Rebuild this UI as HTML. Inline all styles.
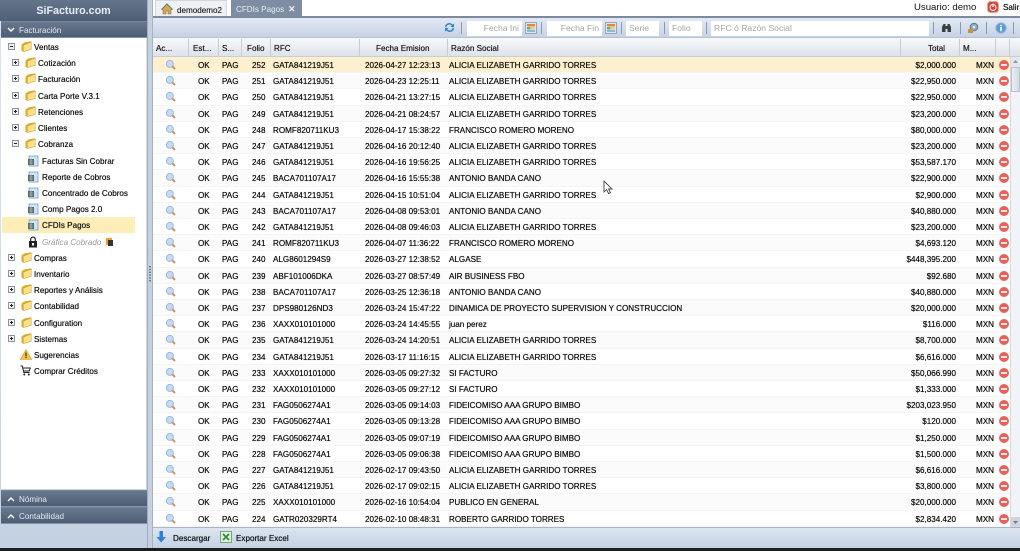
<!DOCTYPE html>
<html lang="es"><head><meta charset="utf-8"><title>SiFacturo</title>
<style>
*{box-sizing:border-box}
html,body{margin:0;padding:0;width:1020px;height:551px;overflow:hidden;background:#fff}
body{font-family:"Liberation Sans",sans-serif;font-size:8.1px;color:#111;position:relative}
.a{position:absolute}
svg{display:block}
#left{left:0;top:0;width:147px;height:548px;background:linear-gradient(#dbe4ef,#c4d1e2)}
#logo{left:0;top:0;width:147px;height:21px;background:linear-gradient(#65758c,#4f5f76);color:#e9eef5;font-weight:bold;font-size:10.7px;text-align:center;line-height:23px;letter-spacing:0}
.ph{left:1px;width:146px;height:17px;background:linear-gradient(#68788f,#4d5d74);color:#e6ebf2;line-height:17px;padding-left:18px;border-top:1px solid #75859b;border-bottom:1px solid #8393a8}
.ph svg{position:absolute;left:6px;top:5px}
#tree{left:1px;top:38px;width:145px;height:451px;background:#fff}
.t{position:absolute;height:16px;line-height:16px;white-space:nowrap;text-shadow:0 0 .5px #222}
.t svg{position:absolute}
.it{left:0;width:145px}
.it span{position:absolute;top:1px}
#sep{left:147px;top:0;width:6px;height:548px;background:#c5d1e1;border-left:1px solid #9fadbf;border-right:1px solid #a5b2c4}
#tabs{left:153px;top:0;width:867px;height:17px;background:#fff}
.tab{position:absolute;top:0;height:16px;line-height:19px;text-shadow:0 0 .4px #555}
#bar{left:153px;top:16px;width:867px;height:2px;background:#7d8a9d}
#tb{left:153px;top:18px;width:867px;height:20px;background:linear-gradient(#e2e9f3,#c6d3e5);border-bottom:1px solid #b5c2d4}
.inp{position:absolute;top:3px;height:15px;background:#fff;color:#a5a5a5;line-height:15px;font-size:8.6px;padding:0 3px}
.s{position:absolute;top:4px;width:1px;height:12px;background:#8b9ab0}
#hd{left:153px;top:38px;width:867px;height:19px;background:linear-gradient(#f8f9fb,#dee3ea);border-bottom:1px solid #c9ced6;color:#222}
#hd span{position:absolute;top:4px;line-height:13px;white-space:nowrap;text-shadow:0 0 .5px #111}
#hd i{position:absolute;top:1px;width:1px;height:17px;background:#c7ccd4}
#g{left:153px;top:57px;width:857px;height:470px;overflow:hidden;background:#fff}
.r{position:relative;height:16.21px;line-height:16.21px;white-space:nowrap;background:#fff;border-bottom:1px solid #f5f5f5}
.r:nth-child(even){background:#fbfbfb}
.r.sel{background:#fdf0cf}
.r b{font-weight:normal;position:absolute;top:1px;color:#111;text-shadow:0 0 .5px #111}
.r b:nth-of-type(1){left:45px}
.r b:nth-of-type(2){left:69px}
.r b:nth-of-type(3){left:99px;width:12px;text-align:center}
.r b:nth-of-type(4){left:120px}
.r b:nth-of-type(5){left:212px}
.r b:nth-of-type(6){left:296px}
.r b:nth-of-type(7){right:54px}
.r b:nth-of-type(8){left:823px}
.r svg{position:absolute;top:3px}
.r .m{left:13px;width:10px;height:10px}
.r .x{left:846px;width:10px;height:10px;top:3px}
#sb{left:1010px;top:57px;width:10px;height:470px;background:#f1f3f6;border-left:1px solid #d6dae0}
#ft{left:153px;top:527px;width:867px;height:21px;background:linear-gradient(#dce5f0,#c5d2e3);border-top:1px solid #aab6c7}
#ft span{text-shadow:0 0 .5px #111}
#bot{left:0;top:548px;width:1020px;height:3px;background:#1e1e1e}
</style></head><body>
<svg width="0" height="0" style="position:absolute">
<defs>
<symbol id="m" viewBox="0 0 10 10"><circle cx="3.9" cy="3.9" r="3.5" fill="#c6daf3" stroke="#9dbadd" stroke-width="1"/><path d="M6.2 6.2L9 9" stroke="#cf9350" stroke-width="2"/></symbol>
<symbol id="x" viewBox="0 0 10 10"><circle cx="5" cy="5" r="4.7" fill="#e9605a"/><circle cx="5" cy="5" r="4.7" fill="none" stroke="#d4736a" stroke-width=".6"/><rect x="2" y="4" width="6" height="2" fill="#fbe3e0"/></symbol>
<symbol id="f" viewBox="0 0 11 11"><path d="M.5 3.5L3.5 1.4 10.5 .3V8.5L2.4 10.8 .5 9.7Z" fill="#dfa92f"/><path d="M2.4 4.2L10.2 1.2V8.3L2.4 10.6Z" fill="#f9e08a" stroke="#cfa233" stroke-width=".5"/></symbol>
<symbol id="p" viewBox="0 0 7 7"><rect x=".5" y=".5" width="6" height="6" fill="#eef0f3" stroke="#8a929c"/><path d="M2 3.5H5M3.5 2V5" stroke="#222" stroke-width="1"/></symbol>
<symbol id="n" viewBox="0 0 7 7"><rect x=".5" y=".5" width="6" height="6" fill="#eef0f3" stroke="#8a929c"/><path d="M2 3.5H5" stroke="#222" stroke-width="1"/></symbol>
<symbol id="d" viewBox="0 0 12 12"><rect x="2" y="1" width="9" height="10" fill="#cfe3f7" stroke="#6f9fd0" stroke-width=".8"/><rect x="1" y="4" width="6" height="6" fill="#5f6b66"/><path d="M2 6H6M2 8H6M4 3V10" stroke="#c8d2cd" stroke-width=".6"/></symbol>
<symbol id="cal" viewBox="0 0 12 12"><rect x=".5" y=".5" width="11" height="11" fill="#dbe7f5" stroke="#8fa7c4"/><rect x="2" y="2" width="8" height="2.4" fill="#e8853a"/><rect x="2" y="5" width="3.5" height="2.5" fill="#6cb35c"/><rect x="6" y="5" width="4" height="2.5" fill="#f0cf6b"/><rect x="2" y="8" width="8" height="2" fill="#8fb6dd"/></symbol>
</defs></svg>

<div class="a" id="left">
<div class="a" id="logo">SiFacturo.com</div>
<div class="a ph" style="top:21px"><svg width="8" height="6" viewBox="0 0 8 6"><path d="M1 1L4 4 7 1" fill="none" stroke="#fff" stroke-width="1.4"/></svg>Facturación</div>
<div class="a" id="tree">
<div class="t it" style="top:1px"><svg style="left:7px;top:4px" width="7" height="7"><use href="#n"/></svg><svg style="left:20px;top:2px" width="11" height="11"><use href="#f"/></svg><span style="left:33px">Ventas</span></div>
<div class="t it" style="top:17px"><svg style="left:11px;top:4px" width="7" height="7"><use href="#p"/></svg><svg style="left:24px;top:2px" width="11" height="11"><use href="#f"/></svg><span style="left:37px">Cotización</span></div>
<div class="t it" style="top:33px"><svg style="left:11px;top:4px" width="7" height="7"><use href="#p"/></svg><svg style="left:24px;top:2px" width="11" height="11"><use href="#f"/></svg><span style="left:37px">Facturación</span></div>
<div class="t it" style="top:50px"><svg style="left:11px;top:4px" width="7" height="7"><use href="#p"/></svg><svg style="left:24px;top:2px" width="11" height="11"><use href="#f"/></svg><span style="left:37px">Carta Porte V.3.1</span></div>
<div class="t it" style="top:66px"><svg style="left:11px;top:4px" width="7" height="7"><use href="#p"/></svg><svg style="left:24px;top:2px" width="11" height="11"><use href="#f"/></svg><span style="left:37px">Retenciones</span></div>
<div class="t it" style="top:82px"><svg style="left:11px;top:4px" width="7" height="7"><use href="#p"/></svg><svg style="left:24px;top:2px" width="11" height="11"><use href="#f"/></svg><span style="left:37px">Clientes</span></div>
<div class="t it" style="top:98px"><svg style="left:11px;top:4px" width="7" height="7"><use href="#n"/></svg><svg style="left:24px;top:2px" width="11" height="11"><use href="#f"/></svg><span style="left:37px">Cobranza</span></div>
<div class="t it" style="top:115px"><svg style="left:26px;top:2px" width="12" height="12"><use href="#d"/></svg><span style="left:41px">Facturas Sin Cobrar</span></div>
<div class="t it" style="top:131px"><svg style="left:26px;top:2px" width="12" height="12"><use href="#d"/></svg><span style="left:41px">Reporte de Cobros</span></div>
<div class="t it" style="top:147px"><svg style="left:26px;top:2px" width="12" height="12"><use href="#d"/></svg><span style="left:41px">Concentrado de Cobros</span></div>
<div class="t it" style="top:163px"><svg style="left:26px;top:2px" width="12" height="12"><use href="#d"/></svg><span style="left:41px">Comp Pagos 2.0</span></div>
<div class="t it" style="top:179px;left:1px;width:133px;background:#fdeeb9;height:16px"><svg style="left:25px;top:2px" width="12" height="12"><use href="#d"/></svg><span style="left:40px">CFDIs Pagos</span></div>
<div class="t it" style="top:196px;color:#9a9a9a;font-style:italic;text-shadow:none"><svg style="left:27px;top:2px" width="10" height="12" viewBox="0 0 10 12"><path d="M2.7 5V3.4a2.3 2.3 0 014.6 0V5" fill="none" stroke="#222" stroke-width="1.2"/><rect x="1" y="5" width="8" height="6.5" fill="#222"/><rect x="4" y="7" width="2" height="2.5" fill="#fff"/></svg><span style="left:41px">Gráfica Cobrado</span><svg style="left:104px;top:3px" width="8" height="9" viewBox="0 0 8 9"><rect x="1" y="1" width="6" height="7" fill="#e8a030"/><rect x="3" y="3" width="5" height="6" fill="#333"/></svg></div>
<div class="t it" style="top:212px"><svg style="left:7px;top:4px" width="7" height="7"><use href="#p"/></svg><svg style="left:20px;top:2px" width="11" height="11"><use href="#f"/></svg><span style="left:33px">Compras</span></div>
<div class="t it" style="top:228px"><svg style="left:7px;top:4px" width="7" height="7"><use href="#p"/></svg><svg style="left:20px;top:2px" width="11" height="11"><use href="#f"/></svg><span style="left:33px">Inventario</span></div>
<div class="t it" style="top:244px"><svg style="left:7px;top:4px" width="7" height="7"><use href="#p"/></svg><svg style="left:20px;top:2px" width="11" height="11"><use href="#f"/></svg><span style="left:33px">Reportes y Análisis</span></div>
<div class="t it" style="top:260px"><svg style="left:7px;top:4px" width="7" height="7"><use href="#p"/></svg><svg style="left:20px;top:2px" width="11" height="11"><use href="#f"/></svg><span style="left:33px">Contabilidad</span></div>
<div class="t it" style="top:277px"><svg style="left:7px;top:4px" width="7" height="7"><use href="#p"/></svg><svg style="left:20px;top:2px" width="11" height="11"><use href="#f"/></svg><span style="left:33px">Configuration</span></div>
<div class="t it" style="top:293px"><svg style="left:7px;top:4px" width="7" height="7"><use href="#p"/></svg><svg style="left:20px;top:2px" width="11" height="11"><use href="#f"/></svg><span style="left:33px">Sistemas</span></div>
<div class="t it" style="top:309px"><svg style="left:19px;top:2px" width="12" height="11" viewBox="0 0 12 11"><path d="M6 .5L11.7 10.5H.3Z" fill="#f5c542" stroke="#d49a2a" stroke-width=".6"/><rect x="5.4" y="3.5" width="1.2" height="4" fill="#333"/><rect x="5.4" y="8" width="1.2" height="1.2" fill="#333"/></svg><span style="left:33px">Sugerencias</span></div>
<div class="t it" style="top:325px"><svg style="left:19px;top:2px" width="11" height="11" viewBox="0 0 11 11"><path d="M.5 1H2.3L3.8 7.5H9.5M2.8 3H10.2L9.3 6H3.5" fill="none" stroke="#222" stroke-width="1"/><circle cx="4.3" cy="9.5" r="1" fill="#222"/><circle cx="8.8" cy="9.5" r="1" fill="#222"/></svg><span style="left:33px">Comprar Créditos</span></div>
</div>
<div class="a ph" style="top:490px"><svg width="8" height="6" viewBox="0 0 8 6"><path d="M1 5L4 2 7 5" fill="none" stroke="#fff" stroke-width="1.4"/></svg>Nómina</div>
<div class="a ph" style="top:507px"><svg width="8" height="6" viewBox="0 0 8 6"><path d="M1 5L4 2 7 5" fill="none" stroke="#fff" stroke-width="1.4"/></svg>Contabilidad</div>
</div>

<div class="a" id="sep"><svg style="position:absolute;left:1px;top:266px" width="2" height="16"><path d="M1 0V16" stroke="#556" stroke-width="1.4" stroke-dasharray="1.4 1.4"/></svg></div>

<div class="a" id="tabs">
<div class="tab" style="left:2px;width:72px;background:#edf0f4;border:1px solid #d3d8df;border-bottom:0;padding-left:21px;color:#222">demodemo2<svg style="position:absolute;left:5px;top:2px" width="12" height="12" viewBox="0 0 12 12"><path d="M6 1L.5 6.5H2V11H5V8H7V11H10V6.5H11.5Z" fill="#d9a45b" stroke="#8a6a3a" stroke-width=".6"/><path d="M.5 6.5L6 1 11.5 6.5" fill="none" stroke="#5b8a4c" stroke-width="1"/></svg></div>
<div class="tab" style="left:78px;width:71px;background:#7f8da2;padding-left:5px;color:#e8edf3;height:17px;text-shadow:none">CFDIs Pagos<span style="position:absolute;left:57px;top:0;font-weight:bold;font-size:9px">✕</span></div>
<span class="a" style="left:761px;top:1px;font-size:9.6px;color:#111;line-height:13px">Usuario: demo</span>
<svg class="a" style="left:834px;top:1px" width="12" height="12" viewBox="0 0 12 12"><rect x=".5" y=".5" width="11" height="11" rx="3" fill="#d9443a" stroke="#e9a58c"/><circle cx="6" cy="6.5" r="3" fill="none" stroke="#fff" stroke-width="1"/><path d="M6 2.5V6" stroke="#fff" stroke-width="1.2"/></svg>
<span class="a" style="left:850px;top:1px;color:#111;line-height:13px;text-shadow:0 0 .5px #111">Salir</span>
</div>
<div class="a" id="bar"></div>

<div class="a" id="tb">
<svg class="a" style="left:291px;top:4px" width="11" height="11" viewBox="0 0 11 11"><path d="M1 5A4.3 4.3 0 018.6 2.6L10 1.5V5H6.6L7.8 3.7A3 3 0 002.4 5.2Z" fill="#2f80d0"/><path d="M10 6A4.3 4.3 0 012.4 8.4L1 9.5V6H4.4L3.2 7.3A3 3 0 008.6 5.8Z" fill="#2f80d0"/></svg>
<i class="s" style="left:308px"></i>
<div class="inp" style="left:314px;width:55px;text-align:right">Fecha Ini</div>
<svg class="a" style="left:372px;top:4px" width="12" height="12"><use href="#cal"/></svg>
<i class="s" style="left:388px"></i>
<div class="inp" style="left:394px;width:55px;text-align:right">Fecha Fin</div>
<svg class="a" style="left:452px;top:4px" width="12" height="12"><use href="#cal"/></svg>
<i class="s" style="left:468px"></i>
<div class="inp" style="left:473px;width:33px">Serie</div>
<i class="s" style="left:511px"></i>
<div class="inp" style="left:516px;width:33px">Folio</div>
<i class="s" style="left:553px"></i>
<div class="inp" style="left:558px;width:218px">RFC ó Razón Social</div>
<i class="s" style="left:780px"></i>
<svg class="a" style="left:788px;top:5px" width="11" height="10" viewBox="0 0 11 10"><path d="M1 9V4L2.5 1H4.5V9ZM6.5 9V1H8.5L10 4V9Z" fill="#3a3f46"/><rect x="4.5" y="3" width="2" height="3" fill="#3a3f46"/></svg>
<i class="s" style="left:807px"></i>
<svg class="a" style="left:814px;top:4px" width="12" height="12" viewBox="0 0 12 12"><circle cx="7" cy="5" r="3.8" fill="#8fa9c6" stroke="#5d7897"/><circle cx="7" cy="5" r="1.3" fill="#e3ecf6"/><rect x="1" y="7" width="5" height="4" fill="#c9933f"/></svg>
<i class="s" style="left:833px"></i>
<svg class="a" style="left:842px;top:4px" width="12" height="12" viewBox="0 0 12 12"><circle cx="6" cy="6" r="5.3" fill="#5c9ad6" stroke="#9ac0e6"/><rect x="5.2" y="5" width="1.6" height="4.2" fill="#fff"/><rect x="5.2" y="2.8" width="1.6" height="1.4" fill="#fff"/></svg>
<i class="s" style="left:860px"></i>
</div>

<div class="a" id="hd">
<span style="left:3px">Ac...</span><i style="left:35px"></i>
<span style="left:40px">Est...</span><i style="left:65px"></i>
<span style="left:69px">S...</span><i style="left:88px"></i>
<span style="left:94px">Folio</span><i style="left:117px"></i>
<span style="left:121px">RFC</span><i style="left:206px"></i>
<span style="left:223px">Fecha Emision</span><i style="left:294px"></i>
<span style="left:298px">Razón Social</span><i style="left:747px"></i>
<span style="left:775px">Total</span><i style="left:806px"></i>
<span style="left:810px">M...</span><i style="left:842px"></i><i style="left:856px"></i>
</div>

<div class="a" id="g">
<div class="r sel"><svg class="m"><use href="#m"/></svg><b>OK</b><b>PAG</b><b>252</b><b>GATA841219J51</b><b>2026-04-27 12:23:13</b><b>ALICIA ELIZABETH GARRIDO TORRES</b><b>$2,000.000</b><b>MXN</b><svg class="x"><use href="#x"/></svg></div>
<div class="r"><svg class="m"><use href="#m"/></svg><b>OK</b><b>PAG</b><b>251</b><b>GATA841219J51</b><b>2026-04-23 12:25:11</b><b>ALICIA ELIZABETH GARRIDO TORRES</b><b>$22,950.000</b><b>MXN</b><svg class="x"><use href="#x"/></svg></div>
<div class="r"><svg class="m"><use href="#m"/></svg><b>OK</b><b>PAG</b><b>250</b><b>GATA841219J51</b><b>2026-04-21 13:27:15</b><b>ALICIA ELIZABETH GARRIDO TORRES</b><b>$22,950.000</b><b>MXN</b><svg class="x"><use href="#x"/></svg></div>
<div class="r"><svg class="m"><use href="#m"/></svg><b>OK</b><b>PAG</b><b>249</b><b>GATA841219J51</b><b>2026-04-21 08:24:57</b><b>ALICIA ELIZABETH GARRIDO TORRES</b><b>$23,200.000</b><b>MXN</b><svg class="x"><use href="#x"/></svg></div>
<div class="r"><svg class="m"><use href="#m"/></svg><b>OK</b><b>PAG</b><b>248</b><b>ROMF820711KU3</b><b>2026-04-17 15:38:22</b><b>FRANCISCO ROMERO MORENO</b><b>$80,000.000</b><b>MXN</b><svg class="x"><use href="#x"/></svg></div>
<div class="r"><svg class="m"><use href="#m"/></svg><b>OK</b><b>PAG</b><b>247</b><b>GATA841219J51</b><b>2026-04-16 20:12:40</b><b>ALICIA ELIZABETH GARRIDO TORRES</b><b>$23,200.000</b><b>MXN</b><svg class="x"><use href="#x"/></svg></div>
<div class="r"><svg class="m"><use href="#m"/></svg><b>OK</b><b>PAG</b><b>246</b><b>GATA841219J51</b><b>2026-04-16 19:56:25</b><b>ALICIA ELIZABETH GARRIDO TORRES</b><b>$53,587.170</b><b>MXN</b><svg class="x"><use href="#x"/></svg></div>
<div class="r"><svg class="m"><use href="#m"/></svg><b>OK</b><b>PAG</b><b>245</b><b>BACA701107A17</b><b>2026-04-16 15:55:38</b><b>ANTONIO BANDA CANO</b><b>$22,900.000</b><b>MXN</b><svg class="x"><use href="#x"/></svg></div>
<div class="r"><svg class="m"><use href="#m"/></svg><b>OK</b><b>PAG</b><b>244</b><b>GATA841219J51</b><b>2026-04-15 10:51:04</b><b>ALICIA ELIZABETH GARRIDO TORRES</b><b>$2,900.000</b><b>MXN</b><svg class="x"><use href="#x"/></svg></div>
<div class="r"><svg class="m"><use href="#m"/></svg><b>OK</b><b>PAG</b><b>243</b><b>BACA701107A17</b><b>2026-04-08 09:53:01</b><b>ANTONIO BANDA CANO</b><b>$40,880.000</b><b>MXN</b><svg class="x"><use href="#x"/></svg></div>
<div class="r"><svg class="m"><use href="#m"/></svg><b>OK</b><b>PAG</b><b>242</b><b>GATA841219J51</b><b>2026-04-08 09:46:03</b><b>ALICIA ELIZABETH GARRIDO TORRES</b><b>$23,200.000</b><b>MXN</b><svg class="x"><use href="#x"/></svg></div>
<div class="r"><svg class="m"><use href="#m"/></svg><b>OK</b><b>PAG</b><b>241</b><b>ROMF820711KU3</b><b>2026-04-07 11:36:22</b><b>FRANCISCO ROMERO MORENO</b><b>$4,693.120</b><b>MXN</b><svg class="x"><use href="#x"/></svg></div>
<div class="r"><svg class="m"><use href="#m"/></svg><b>OK</b><b>PAG</b><b>240</b><b>ALG8601294S9</b><b>2026-03-27 12:38:52</b><b>ALGASE</b><b>$448,395.200</b><b>MXN</b><svg class="x"><use href="#x"/></svg></div>
<div class="r"><svg class="m"><use href="#m"/></svg><b>OK</b><b>PAG</b><b>239</b><b>ABF101006DKA</b><b>2026-03-27 08:57:49</b><b>AIR BUSINESS FBO</b><b>$92.680</b><b>MXN</b><svg class="x"><use href="#x"/></svg></div>
<div class="r"><svg class="m"><use href="#m"/></svg><b>OK</b><b>PAG</b><b>238</b><b>BACA701107A17</b><b>2026-03-25 12:36:18</b><b>ANTONIO BANDA CANO</b><b>$40,880.000</b><b>MXN</b><svg class="x"><use href="#x"/></svg></div>
<div class="r"><svg class="m"><use href="#m"/></svg><b>OK</b><b>PAG</b><b>237</b><b>DPS980126ND3</b><b>2026-03-24 15:47:22</b><b>DINAMICA DE PROYECTO SUPERVISION Y CONSTRUCCION</b><b>$20,000.000</b><b>MXN</b><svg class="x"><use href="#x"/></svg></div>
<div class="r"><svg class="m"><use href="#m"/></svg><b>OK</b><b>PAG</b><b>236</b><b>XAXX010101000</b><b>2026-03-24 14:45:55</b><b>juan perez</b><b>$116.000</b><b>MXN</b><svg class="x"><use href="#x"/></svg></div>
<div class="r"><svg class="m"><use href="#m"/></svg><b>OK</b><b>PAG</b><b>235</b><b>GATA841219J51</b><b>2026-03-24 14:20:51</b><b>ALICIA ELIZABETH GARRIDO TORRES</b><b>$8,700.000</b><b>MXN</b><svg class="x"><use href="#x"/></svg></div>
<div class="r"><svg class="m"><use href="#m"/></svg><b>OK</b><b>PAG</b><b>234</b><b>GATA841219J51</b><b>2026-03-17 11:16:15</b><b>ALICIA ELIZABETH GARRIDO TORRES</b><b>$6,616.000</b><b>MXN</b><svg class="x"><use href="#x"/></svg></div>
<div class="r"><svg class="m"><use href="#m"/></svg><b>OK</b><b>PAG</b><b>233</b><b>XAXX010101000</b><b>2026-03-05 09:27:32</b><b>SI FACTURO</b><b>$50,066.990</b><b>MXN</b><svg class="x"><use href="#x"/></svg></div>
<div class="r"><svg class="m"><use href="#m"/></svg><b>OK</b><b>PAG</b><b>232</b><b>XAXX010101000</b><b>2026-03-05 09:27:12</b><b>SI FACTURO</b><b>$1,333.000</b><b>MXN</b><svg class="x"><use href="#x"/></svg></div>
<div class="r"><svg class="m"><use href="#m"/></svg><b>OK</b><b>PAG</b><b>231</b><b>FAG0506274A1</b><b>2026-03-05 09:14:03</b><b>FIDEICOMISO AAA GRUPO BIMBO</b><b>$203,023.950</b><b>MXN</b><svg class="x"><use href="#x"/></svg></div>
<div class="r"><svg class="m"><use href="#m"/></svg><b>OK</b><b>PAG</b><b>230</b><b>FAG0506274A1</b><b>2026-03-05 09:13:28</b><b>FIDEICOMISO AAA GRUPO BIMBO</b><b>$120.000</b><b>MXN</b><svg class="x"><use href="#x"/></svg></div>
<div class="r"><svg class="m"><use href="#m"/></svg><b>OK</b><b>PAG</b><b>229</b><b>FAG0506274A1</b><b>2026-03-05 09:07:19</b><b>FIDEICOMISO AAA GRUPO BIMBO</b><b>$1,250.000</b><b>MXN</b><svg class="x"><use href="#x"/></svg></div>
<div class="r"><svg class="m"><use href="#m"/></svg><b>OK</b><b>PAG</b><b>228</b><b>FAG0506274A1</b><b>2026-03-05 09:06:38</b><b>FIDEICOMISO AAA GRUPO BIMBO</b><b>$1,500.000</b><b>MXN</b><svg class="x"><use href="#x"/></svg></div>
<div class="r"><svg class="m"><use href="#m"/></svg><b>OK</b><b>PAG</b><b>227</b><b>GATA841219J51</b><b>2026-02-17 09:43:50</b><b>ALICIA ELIZABETH GARRIDO TORRES</b><b>$6,616.000</b><b>MXN</b><svg class="x"><use href="#x"/></svg></div>
<div class="r"><svg class="m"><use href="#m"/></svg><b>OK</b><b>PAG</b><b>226</b><b>GATA841219J51</b><b>2026-02-17 09:02:15</b><b>ALICIA ELIZABETH GARRIDO TORRES</b><b>$3,800.000</b><b>MXN</b><svg class="x"><use href="#x"/></svg></div>
<div class="r"><svg class="m"><use href="#m"/></svg><b>OK</b><b>PAG</b><b>225</b><b>XAXX010101000</b><b>2026-02-16 10:54:04</b><b>PUBLICO EN GENERAL</b><b>$20,000.000</b><b>MXN</b><svg class="x"><use href="#x"/></svg></div>
<div class="r"><svg class="m"><use href="#m"/></svg><b>OK</b><b>PAG</b><b>224</b><b>GATR020329RT4</b><b>2026-02-10 08:48:31</b><b>ROBERTO GARRIDO TORRES</b><b>$2,834.420</b><b>MXN</b><svg class="x"><use href="#x"/></svg></div>
</div>

<div class="a" id="sb">
<svg class="a" style="left:0;top:0" width="9" height="10"><rect width="9" height="10" fill="#e4e8ee"/><path d="M2 6L4.5 3 7 6Z" fill="#8a96a6"/></svg>
<div class="a" style="left:0;top:10px;width:9px;height:25px;background:linear-gradient(90deg,#eceff3,#d3d9e2);border:1px solid #b9c1cc"></div>
<svg class="a" style="left:0;top:460px" width="9" height="10"><rect width="9" height="10" fill="#cfd5de"/><path d="M2 4L4.5 7 7 4Z" fill="#6f7b8b"/></svg>
</div>

<div class="a" id="ft">
<svg class="a" style="left:3px;top:3px" width="11" height="12" viewBox="0 0 11 12"><path d="M3.5 0H7V6H10L5.2 11.5 .5 6H3.5Z" fill="#2f7fd6"/></svg>
<span class="a" style="left:20px;top:5px;line-height:11px">Descargar</span>
<svg class="a" style="left:67px;top:3px" width="12" height="12" viewBox="0 0 12 12"><rect x=".5" y=".5" width="11" height="11" fill="#dfeedd" stroke="#7da672"/><path d="M3 3L9 9M9 3L3 9" stroke="#2f8a3a" stroke-width="1.6"/></svg>
<span class="a" style="left:83px;top:5px;line-height:11px">Exportar Excel</span>
</div>

<svg class="a" style="left:603px;top:180px" width="11" height="15" viewBox="0 0 11 15"><path d="M1 1V12L3.6 9.6 5.6 13.6 7.4 12.7 5.5 9H9Z" fill="#fff" stroke="#444" stroke-width=".9"/></svg>
<div class="a" id="bot"></div>
</body></html>
